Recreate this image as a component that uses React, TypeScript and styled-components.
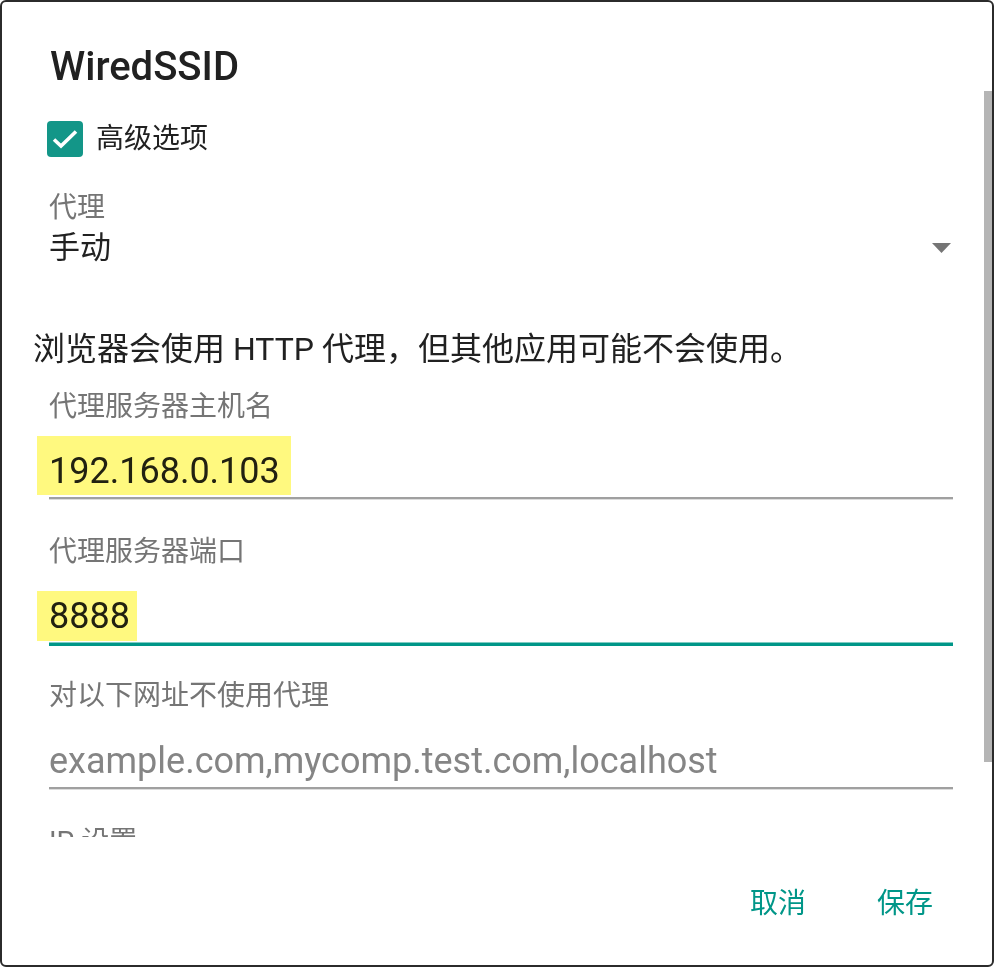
import React from "react";
import styled, { createGlobalStyle } from "styled-components";

const GlobalStyle = createGlobalStyle`
  html, body { margin: 0; padding: 0; background: #fff; }
  body { font-family: Roboto, "Noto Sans CJK SC", sans-serif; }
  * { box-sizing: border-box; }
`;

const Dialog = styled.div`
  width: 994px;
  height: 967px;
  border: 2px solid #2b2b2b;
  border-radius: 6px;
  background: #fff;
  display: flex;
  flex-direction: column;
  overflow: hidden;
`;

const Title = styled.h1`
  margin: 0;
  padding: 41px 0 0 48px;
  font: 500 40px/48px Roboto, "Noto Sans CJK SC", sans-serif;
  color: #212121;
  flex: none;
`;

const ScrollArea = styled.div`
  position: relative;
  height: 746px;
  overflow: hidden;
  flex: none;
`;

const ScrollThumb = styled.div`
  position: absolute;
  top: 0;
  right: 0;
  width: 8px;
  height: 671px;
  background: #b5b5b5;
`;

const CheckRow = styled.label`
  display: flex;
  align-items: center;
  gap: 13px;
  padding: 30px 0 0 45px;
  font-size: 28px;
  line-height: 36px;
  color: #212121;
`;

const CheckBox = styled.span`
  width: 36px;
  height: 36px;
  border-radius: 4px;
  background: #139688;
  display: flex;
  align-items: center;
  justify-content: center;
`;

const Label = styled.div<{ $top: number }>`
  margin-top: ${(p) => p.$top}px;
  padding-left: 47px;
  font-size: 28px;
  line-height: 40px;
  color: #757575;
  white-space: nowrap;
`;

const SpinnerRow = styled.div`
  display: flex;
  align-items: center;
  justify-content: space-between;
  height: 40px;
  padding: 0 41px 0 47px;
  font-size: 31px;
  line-height: 40px;
  color: #212121;
`;

const Note = styled.p`
  margin: 59px 0 0;
  padding-left: 31px;
  font-size: 32px;
  line-height: 44px;
  color: #212121;
  white-space: nowrap;
`;

const Field = styled.div<{ $top: number }>`
  position: relative;
  margin: ${(p) => p.$top}px 39px 0 47px;
`;

const FieldText = styled.div<{ $hint?: boolean }>`
  font-size: 36px;
  line-height: 52px;
  color: ${(p) => (p.$hint ? "#858585" : "#212121")};
  white-space: nowrap;
`;

const Highlight = styled.span<{ $top: number; $width: number; $height: number }>`
  position: absolute;
  left: -12px;
  top: ${(p) => p.$top}px;
  width: ${(p) => p.$width}px;
  height: ${(p) => p.$height}px;
  background: #fff97f;
  mix-blend-mode: multiply;
  pointer-events: none;
`;

const Underline = styled.div<{ $focused?: boolean }>`
  height: 4px;
  background: ${(p) =>
    p.$focused
      ? "linear-gradient(#7fcbc3 0 1px, #009688 1px 4px)"
      : "linear-gradient(#a0a0a0 0 2px, #dcdcdc 2px 3px, transparent 3px 4px)"};
`;

const ButtonBar = styled.div`
  flex: none;
  display: flex;
  justify-content: flex-end;
  gap: 71px;
  padding: 47px 59px 0 0;
`;

const TextButton = styled.button`
  border: none;
  background: none;
  padding: 0;
  margin: 0;
  font-family: Roboto, "Noto Sans CJK SC", sans-serif;
  font-size: 28px;
  line-height: 40px;
  color: #009688;
  cursor: pointer;
`;

export default function App() {
  return (
    <>
      <GlobalStyle />
      <Dialog>
        <Title>WiredSSID</Title>
        <ScrollArea>
          <CheckRow>
            <CheckBox>
              <svg width="36" height="36" viewBox="0 0 36 36">
                <path d="M7 18.5 L14 25 L29 10.5" fill="none" stroke="#fff" strokeWidth="3.6" strokeLinecap="butt" strokeLinejoin="miter" />
              </svg>
            </CheckBox>
            高级选项
          </CheckRow>
          <Label $top={31}>代理</Label>
          <SpinnerRow>
            <span>手动</span>
            <svg width="19" height="10" viewBox="0 0 19 10">
              <path d="M0 0 H19 L9.5 10 Z" fill="#757575" />
            </svg>
          </SpinnerRow>
          <Note>浏览器会使用 HTTP 代理，但其他应用可能不会使用。</Note>
          <Label $top={16}>代理服务器主机名</Label>
          <Field $top={18}>
            <Highlight $top={-9} $width={254} $height={59} />
            <FieldText>192.168.0.103</FieldText>
            <Underline />
          </Field>
          <Label $top={31}>代理服务器端口</Label>
          <Field $top={18}>
            <Highlight $top={1} $width={100} $height={50} />
            <FieldText>8888</FieldText>
            <Underline $focused />
          </Field>
          <Label $top={30}>对以下网址不使用代理</Label>
          <Field $top={19}>
            <FieldText $hint>example.com,mycomp.test.com,localhost</FieldText>
            <Underline />
          </Field>
          <Label $top={31}>IP 设置</Label>
          <ScrollThumb />
        </ScrollArea>
        <ButtonBar>
          <TextButton>取消</TextButton>
          <TextButton>保存</TextButton>
        </ButtonBar>
      </Dialog>
    </>
  );
}
